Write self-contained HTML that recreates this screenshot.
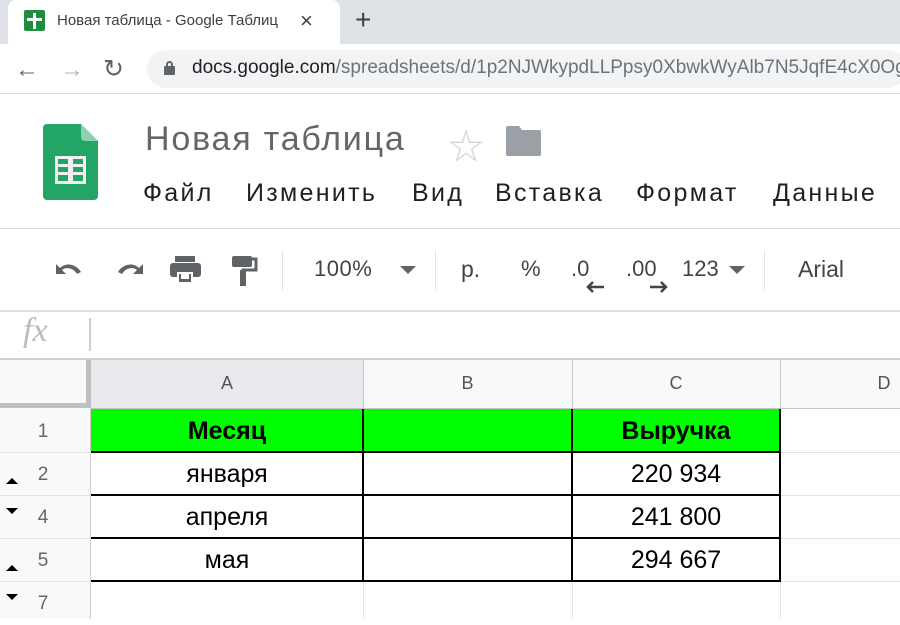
<!DOCTYPE html><html><head><meta charset="utf-8"><style>
*{margin:0;padding:0;box-sizing:border-box}
body{width:900px;height:619px;overflow:hidden;background:#fff;font-family:"Liberation Sans","Noto Sans CJK SC",sans-serif;position:relative}
.a{position:absolute;white-space:nowrap}
.m{position:absolute;white-space:nowrap;top:179px;font-size:25px;color:#202124;letter-spacing:2.3px}
.hl{position:absolute;height:1px;background:#e2e3e3}
.vl{position:absolute;width:1px;background:#e2e3e3}
.bk{position:absolute;background:#000}
.c{position:absolute;text-align:center;font-size:25px;color:#000;line-height:43px}
.rn{position:absolute;left:0;width:86px;text-align:center;font-size:19px;color:#666;line-height:43px}
</style></head><body>
<div class="a" style="left:0;top:0;width:900px;height:44px;background:#dee1e6"></div>
<div class="a" style="left:8px;top:0;width:332px;height:44px;background:#fff;border-radius:8px 8px 0 0"></div>
<div class="a" style="left:24px;top:10px;width:21px;height:21px;background:#1e8e3e;border-radius:2px"></div>
<div class="a" style="left:33px;top:13px;width:3px;height:16px;background:#fff"></div>
<div class="a" style="left:27px;top:18px;width:15px;height:3px;background:#fff"></div>
<div class="a" style="left:57px;top:12px;font-size:15px;color:#3c4043">Новая таблица - Google Таблиц</div>
<div class="a" style="left:300px;top:8px;font-size:22px;color:#3c4043">×</div>
<div class="a" style="left:355px;top:4px;font-size:28px;color:#3c4043">+</div>
<div class="a" style="left:15px;top:56px;font-size:24px;color:#5f6368">←</div>
<div class="a" style="left:60px;top:56px;font-size:24px;color:#b0b3b8">→</div>
<div class="a" style="left:103px;top:54px;font-size:25px;color:#5f6368">↻</div>
<div class="a" style="left:147px;top:50px;width:760px;height:38px;background:#f1f3f4;border-radius:19px"></div>
<div class="a" style="left:164px;top:66px;width:11px;height:9px;background:#5f6368;border-radius:1px"></div>
<div class="a" style="left:166px;top:61px;width:7px;height:8px;border:2px solid #5f6368;border-radius:4px 4px 0 0"></div>
<div class="a" style="left:192px;top:57px;font-size:19px;color:#202124">docs.google.com<span style="color:#6f7378">/spreadsheets/d/1p2NJWkypdLLPpsy0XbwkWyAlb7N5JqfE4cX0Og</span></div>
<div class="hl" style="left:0;top:93px;width:900px;background:#dadce0"></div>
<svg class="a" style="left:43px;top:124px" width="56" height="76" viewBox="0 0 56 76"><path d="M4 0H38L55 17V72a4 4 0 0 1-4 4H4a4 4 0 0 1-4-4V4a4 4 0 0 1 4-4z" fill="#23a566"/><path d="M38 0L55 17H42a4 4 0 0 1-4-4z" fill="#8ed1b1"/><rect x="12" y="32" width="31" height="28" fill="#f1f1f1"/><g fill="#23a566"><rect x="15" y="35" width="10" height="5"/><rect x="30" y="35" width="10" height="5"/><rect x="15" y="43" width="10" height="5"/><rect x="30" y="43" width="10" height="5"/><rect x="15" y="51" width="10" height="6"/><rect x="30" y="51" width="10" height="6"/></g></svg>
<div class="a" style="left:145px;top:120px;font-size:34px;color:#666;letter-spacing:1.8px">Новая таблица</div>
<div class="a" style="left:448px;top:118px;font-size:36px;color:#d5d5d5">☆</div>
<svg class="a" style="left:506px;top:126px" width="35" height="30"><path d="M2 0h11l3 4h17a2 2 0 0 1 2 2v22a2 2 0 0 1-2 2H2a2 2 0 0 1-2-2V2a2 2 0 0 1 2-2z" fill="#9aa0a6"/></svg>
<div class="m" style="left:143px">Файл</div>
<div class="m" style="left:246px">Изменить</div>
<div class="m" style="left:412px">Вид</div>
<div class="m" style="left:495px">Вставка</div>
<div class="m" style="left:636px">Формат</div>
<div class="m" style="left:773px">Данные</div>
<div class="hl" style="left:0;top:228px;width:900px;background:#dadce0"></div>
<svg class="a" style="left:52px;top:258px" width="36" height="24"><path d="M4 6v10h10l-4-4c3-3 11-3 15 4l4-2C24 6 14 4 8 10z" fill="#5f6368"/></svg>
<svg class="a" style="left:111px;top:258px" width="36" height="24"><path d="M32 6v10H22l4-4c-3-3-11-3-15 4l-4-2C12 6 22 4 28 10z" fill="#5f6368"/></svg>
<svg class="a" style="left:168px;top:256px" width="36" height="30"><rect x="7" y="0" width="20" height="6" fill="#5f6368"/><rect x="2" y="7" width="31" height="14" rx="3" fill="#5f6368"/><rect x="9" y="16" width="16" height="11" fill="#fff"/><rect x="11" y="18" width="12" height="8" fill="#5f6368"/><rect x="13" y="18" width="8" height="5" fill="#fff"/></svg>
<svg class="a" style="left:230px;top:254px" width="30" height="32"><rect x="2" y="2" width="20" height="11" rx="2" fill="#5f6368"/><path d="M22 5h4v11H13v15" stroke="#5f6368" stroke-width="3" fill="none"/><rect x="10" y="16" width="6" height="16" fill="#5f6368"/></svg>
<div class="vl" style="left:282px;top:250px;height:40px"></div>
<div class="a" style="left:314px;top:256px;font-size:22px;color:#444;letter-spacing:0.5px">100%</div>
<div class="a" style="left:400px;top:266px;width:0;height:0;border-left:8px solid transparent;border-right:8px solid transparent;border-top:8px solid #5f6368"></div>
<div class="vl" style="left:435px;top:250px;height:40px"></div>
<div class="a" style="left:461px;top:256px;font-size:23px;color:#444">р.</div>
<div class="a" style="left:521px;top:256px;font-size:22px;color:#444">%</div>
<div class="a" style="left:571px;top:256px;font-size:22px;color:#444">.0</div>
<svg class="a" style="left:586px;top:281px" width="20" height="12"><path d="M2 6h16M7 1L2 6l5 5" stroke="#444" stroke-width="2.5" fill="none"/></svg>
<div class="a" style="left:626px;top:256px;font-size:22px;color:#444">.00</div>
<svg class="a" style="left:648px;top:281px" width="20" height="12"><path d="M2 6h16M13 1l5 5-5 5" stroke="#444" stroke-width="2.5" fill="none"/></svg>
<div class="a" style="left:682px;top:256px;font-size:22px;color:#444">123</div>
<div class="a" style="left:729px;top:266px;width:0;height:0;border-left:8px solid transparent;border-right:8px solid transparent;border-top:8px solid #5f6368"></div>
<div class="vl" style="left:764px;top:250px;height:40px"></div>
<div class="a" style="left:798px;top:256px;font-size:23px;color:#444">Arial</div>
<div class="hl" style="left:0;top:310px;width:900px;height:2px;background:#e0e0e0"></div>
<div class="a" style="left:23px;top:312px;font-size:34px;font-style:italic;font-family:'Liberation Serif',serif;color:#bbb">fx</div>
<div class="vl" style="left:89px;top:318px;height:33px;width:2px;background:#ccc"></div>
<div class="hl" style="left:0;top:358px;width:900px;height:2px;background:#d0d0d0"></div>
<div class="a" style="left:0;top:360px;width:900px;height:48px;background:#f8f9fa"></div>
<div class="a" style="left:91px;top:360px;width:272px;height:48px;background:#e8eaed"></div>
<div class="a" style="left:0;top:403px;width:91px;height:5px;background:#c0c0c0"></div>
<div class="a" style="left:86px;top:360px;width:5px;height:259px;background:#c0c0c0"></div>
<div class="a" style="left:86px;top:408px;width:5px;height:211px;background:#f8f9fa"></div>
<div class="a" style="left:90px;top:408px;width:1px;height:211px;background:#d0d0d0"></div>
<div class="a" style="left:0;top:408px;width:86px;height:211px;background:#f8f9fa"></div>
<div class="vl" style="left:363px;top:360px;height:48px;background:#c6c6c6"></div>
<div class="vl" style="left:572px;top:360px;height:48px;background:#c6c6c6"></div>
<div class="vl" style="left:780px;top:360px;height:48px;background:#c6c6c6"></div>
<div class="hl" style="left:91px;top:408px;width:809px;background:#c6c6c6"></div>
<div class="c" style="left:91px;top:362px;width:272px;font-size:18px;color:#555">A</div>
<div class="c" style="left:363px;top:362px;width:209px;font-size:18px;color:#555">B</div>
<div class="c" style="left:572px;top:362px;width:208px;font-size:18px;color:#555">C</div>
<div class="c" style="left:780px;top:362px;width:208px;font-size:18px;color:#555">D</div>
<div class="hl" style="left:0;top:452px;width:900px"></div>
<div class="hl" style="left:0;top:495px;width:900px"></div>
<div class="hl" style="left:0;top:538px;width:900px"></div>
<div class="hl" style="left:0;top:581px;width:900px"></div>
<div class="vl" style="left:363px;top:409px;height:210px"></div>
<div class="vl" style="left:572px;top:409px;height:210px"></div>
<div class="vl" style="left:780px;top:409px;height:210px"></div>
<div class="a" style="left:91px;top:409px;width:689px;height:43px;background:#00ff00"></div>
<div class="bk" style="left:91px;top:451px;width:690px;height:2px"></div>
<div class="bk" style="left:91px;top:494px;width:690px;height:2px"></div>
<div class="bk" style="left:91px;top:537px;width:690px;height:2px"></div>
<div class="bk" style="left:91px;top:580px;width:690px;height:2px"></div>
<div class="bk" style="left:362px;top:409px;width:2px;height:173px"></div>
<div class="bk" style="left:571px;top:409px;width:2px;height:173px"></div>
<div class="bk" style="left:779px;top:409px;width:2px;height:173px"></div>
<div class="rn" style="top:410px">1</div>
<div class="rn" style="top:453px">2</div>
<div class="rn" style="top:496px">4</div>
<div class="rn" style="top:539px">5</div>
<div class="rn" style="top:582px">7</div>
<div class="a" style="left:6px;top:478px;border-left:6px solid transparent;border-right:6px solid transparent;border-bottom:6px solid #000"></div>
<div class="a" style="left:6px;top:508px;border-left:6px solid transparent;border-right:6px solid transparent;border-top:6px solid #000"></div>
<div class="a" style="left:6px;top:565px;border-left:6px solid transparent;border-right:6px solid transparent;border-bottom:6px solid #000"></div>
<div class="a" style="left:6px;top:594px;border-left:6px solid transparent;border-right:6px solid transparent;border-top:6px solid #000"></div>
<div class="c" style="left:91px;top:410px;width:272px;font-weight:bold">Месяц</div>
<div class="c" style="left:572px;top:410px;width:208px;font-weight:bold">Выручка</div>
<div class="c" style="left:91px;top:453px;width:272px">января</div>
<div class="c" style="left:91px;top:496px;width:272px">апреля</div>
<div class="c" style="left:91px;top:539px;width:272px">мая</div>
<div class="c" style="left:572px;top:453px;width:208px">220 934</div>
<div class="c" style="left:572px;top:496px;width:208px">241 800</div>
<div class="c" style="left:572px;top:539px;width:208px">294 667</div>
</body></html>
